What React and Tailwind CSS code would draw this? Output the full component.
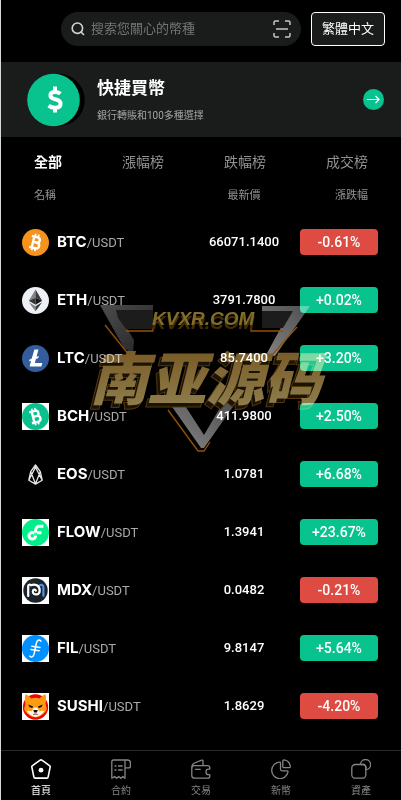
import { useState } from 'react'

const coins = [
  { name: 'BTC', price: '66071.1400', change: '-0.61%', Icon: BtcIcon },
  { name: 'ETH', price: '3791.7800', change: '+0.02%', Icon: EthIcon },
  { name: 'LTC', price: '85.7400', change: '+3.20%', Icon: LtcIcon },
  { name: 'BCH', price: '411.9800', change: '+2.50%', Icon: BchIcon },
  { name: 'EOS', price: '1.0781', change: '+6.68%', Icon: EosIcon },
  { name: 'FLOW', price: '1.3941', change: '+23.67%', Icon: FlowIcon },
  { name: 'MDX', price: '0.0482', change: '-0.21%', Icon: MdxIcon },
  { name: 'FIL', price: '9.8147', change: '+5.64%', Icon: FilIcon },
  { name: 'SUSHI', price: '1.8629', change: '-4.20%', Icon: ShibaIcon },
]

const tabs = ['全部', '漲幅榜', '跌幅榜', '成交榜']

const navItems = [
  { label: '首頁', Icon: HomeIcon },
  { label: '合約', Icon: ContractIcon },
  { label: '交易', Icon: WalletIcon },
  { label: '新幣', Icon: PieIcon },
  { label: '資產', Icon: AssetsIcon },
]

function CoinSvg({ square, children }) {
  return (
    <svg viewBox="0 0 27 27" className="size-[27px] shrink-0" aria-hidden="true">
      {square && <rect width="27" height="27" fill="#fff" />}
      {children}
    </svg>
  )
}

function BitcoinSign() {
  return (
    <g fill="none" stroke="#fff" strokeWidth="2.4">
      <path d="M11 8v11.2M8.4 8h6c3.7 0 3.7 5.3 0 5.3H11M14.4 13.3c4.6 0 4.6 5.9 0 5.9h-6" />
      <path d="M11.7 5v3M14.9 5v3M11.7 19v3M14.9 19v3" strokeWidth="1.7" />
    </g>
  )
}

function BtcIcon() {
  return (
    <CoinSvg>
      <circle cx="13.5" cy="13.5" r="13.5" fill="#f7931a" />
      <g transform="rotate(14 13.5 13.5)"><BitcoinSign /></g>
    </CoinSvg>
  )
}

function EthIcon() {
  return (
    <CoinSvg>
      <circle cx="13.5" cy="13.5" r="13.5" fill="#edf0f4" />
      <path d="M13.5 2.5 6.8 13.7l6.7-3z" fill="#828384" />
      <path d="m13.5 2.5 6.7 11.2-6.7-3z" fill="#3c3c3b" />
      <path d="m6.8 13.7 6.7-3v7z" fill="#343434" />
      <path d="m20.2 13.7-6.7-3v7z" fill="#161616" />
      <path d="m6.8 15.2 6.7 4v5z" fill="#828384" />
      <path d="m20.2 15.2-6.7 4v5z" fill="#3c3c3b" />
    </CoinSvg>
  )
}

function LtcIcon() {
  return (
    <CoinSvg>
      <circle cx="13.5" cy="13.5" r="13.5" fill="#345d9d" />
      <path d="M12.4 4.5h4.1l-2 7.3 2.3-.9-.5 2-2.4 1-1 4h7.4l-.9 3.5H7.6l1.5-5.7-2.1.8.6-2.1 2.1-.8z" fill="#fff" />
    </CoinSvg>
  )
}

function BchIcon() {
  return (
    <CoinSvg square>
      <circle cx="13.5" cy="13.5" r="13.5" fill="#0ac18e" />
      <g transform="rotate(-14 13.5 13.5)"><BitcoinSign /></g>
    </CoinSvg>
  )
}

function EosIcon() {
  return (
    <CoinSvg>
      <path
        d="M13.5 4 8.7 10.6 6.8 19.2l6.7 3.9 6.7-3.9-1.9-8.6zM8.7 10.8l4.8 12 4.8-12M6.8 19.2l6.7-13 6.7 13"
        fill="none"
        stroke="#e8e8e8"
        strokeWidth="1.3"
        strokeLinejoin="round"
      />
    </CoinSvg>
  )
}

function FlowIcon() {
  return (
    <CoinSvg square>
      <circle cx="13.5" cy="13.5" r="13.5" fill="#00ef8b" />
      <circle cx="10.3" cy="16.8" r="3.3" fill="none" stroke="#fff" strokeWidth="3" />
      <path d="M13.6 16.6v-5c0-3 1.8-4.4 4.4-4.4h3.4" fill="none" stroke="#fff" strokeWidth="3" />
      <path d="M13.5 12.2h6v3h-6z" fill="#fff" />
      <path d="M12.1 13.7h3v3h-3z" fill="#16ff99" />
    </CoinSvg>
  )
}

function MdxIcon() {
  return (
    <CoinSvg square>
      <circle cx="13.5" cy="13.5" r="12.2" fill="#1c2229" />
      <g fill="none" strokeWidth="2.2" strokeLinecap="round">
        <path d="M17.3 8.6c2.2-1.5 4.1-.6 4.1 1.8v8.4" stroke="#4b91e2" />
        <path d="M6.2 19V9.2c0-1.8 1.7-1.8 2.8-1 4-1.7 8.7.2 8.7 5.2 0 5.1-6.9 5.2-6.9 1.2 0-2.2 2.6-2.6 3.1-1" stroke="#fff" />
      </g>
    </CoinSvg>
  )
}

function FilIcon() {
  return (
    <CoinSvg square>
      <circle cx="13.5" cy="13.5" r="13.5" fill="#0090ff" />
      <g fill="none" stroke="#fff" strokeWidth="1.5" strokeLinecap="round">
        <path d="M18.9 6.1c-1.7-2.2-3.9-.9-4.6 2.2l-2 9.8c-.7 3.6-2.4 4.7-4.5 3" />
        <path d="m9.8 11.2 8.2 1.2M9 14.5l8.2 1.2" />
      </g>
    </CoinSvg>
  )
}

function ShibaIcon() {
  return (
    <CoinSvg square>
      <circle cx="13.5" cy="14" r="12.7" fill="#f00500" />
      <path d="M3.5 1.2c2.5.7 4.4 2.3 5.7 4.3a14 14 0 0 1 8.6 0c1.3-2 3.2-3.6 5.7-4.3.9 3.5.7 6.7 0 9.4l1.3 5.6c-1.5 4-6 7.3-11.3 8.3-5.3-1-9.8-4.3-11.3-8.3l1.3-5.6c-.7-2.7-.9-5.9 0-9.4z" fill="#ff9b12" />
      <path d="M4.6 18c1.8-.6 3.6-.4 5 .2l2.3-3.8h3.2l2.3 3.8c1.4-.6 3.2-.8 5-.2-1.6 3-4.8 5.3-8.9 6.1-4.1-.8-7.3-3.1-8.9-6.1z" fill="#fff3e4" />
      <path d="m6.3 11.5 4.8 1.9-.8 1.7-2.9-1zM20.7 11.5l-4.8 1.9.8 1.7 2.9-1zM11.2 17h4.6l-1 2.5h-2.6z" fill="#17110d" />
      <path d="M11.4 21.6c1.4-.8 2.8-.8 4.2 0" fill="none" stroke="#4a2c1d" />
    </CoinSvg>
  )
}

function NavSvg({ children }) {
  return (
    <svg
      viewBox="0 0 20 20"
      className="size-5"
      fill="none"
      stroke="currentColor"
      strokeWidth="1.3"
      strokeLinejoin="round"
      strokeLinecap="round"
      aria-hidden="true"
    >
      {children}
    </svg>
  )
}

function HomeIcon() {
  return (
    <NavSvg>
      <path d="M8.8 1.3 1.2 6.8q-.6.4-.4 1.1l2.1 10.2q.2 1 1.2 1h11.8q1 0 1.2-1l2.1-10.2q.2-.7-.4-1.1l-7.6-5.5q-1.2-.8-2.4 0z" strokeWidth="1.6" />
      <circle cx="10" cy="11.2" r="2.4" fill="currentColor" stroke="none" />
    </NavSvg>
  )
}

function ContractIcon() {
  return (
    <NavSvg>
      <path d="M14 1H2.5Q.8 1 .8 2.7v16.5l2.8-1.7 2.1 1.8 2-1.8 2.1 1.8 2-1.8 2.2 1.7zM14 1h2.4q3 0 3 3v3.3q0 1.5-1.5 1.5H14" />
      <path d="M4 7h1M7.5 7h3.7M4 11h1M7.5 11h3.7" />
    </NavSvg>
  )
}

function WalletIcon() {
  return (
    <NavSvg>
      <path d="M18.8 10.2V8.7q0-2-2-2H3.2Q.8 6.7.8 9v7.5q0 2.7 2.7 2.7h13.3q2 0 2-2v-1.5h-1.2c-3.5 0-3.5-5.5 0-5.5z" />
      <path d="M1 8Q1 5 3.5 4l7.2-2.8q1.3-.4 1.3.9v4.4M4.5 10.3h4.7" />
    </NavSvg>
  )
}

function PieIcon() {
  return (
    <NavSvg>
      <path d="M9 3.2A8.2 8.2 0 1 0 17 12.8q.2-1-.8-1H11q-1.5 0-1.5-1.5V4q0-.8-.5-.8z" />
      <path d="M11.8 2v5.4q0 1.3 1.3 1.3h5q1.3 0 1.2-1.2A7 7 0 0 0 13 .8q-1.2 0-1.2 1.2z" />
    </NavSvg>
  )
}

function AssetsIcon() {
  return (
    <NavSvg>
      <rect x=".8" y="5.5" width="14" height="13.7" rx="3.5" />
      <path d="M9.4 5.3a5.1 5.1 0 1 1 5.5 5.4" />
      <path d="M10.5 5.7q2-1.2 3.5.2t.7 4" />
    </NavSvg>
  )
}

function Watermark() {
  return (
    <div className="pointer-events-none absolute top-[295px] left-[79px] opacity-65 mix-blend-screen" aria-hidden="true">
      <svg viewBox="0 0 260 165" className="h-[165px] w-[260px]">
        <defs>
          <linearGradient id="steelLeft" x1="0" x2="1" y1="0" y2="1">
            <stop offset="0" stopColor="#777" />
            <stop offset="1" stopColor="#333" />
          </linearGradient>
          <linearGradient id="steelRight" x1="1" x2="0" y1="0" y2="1">
            <stop offset="0" stopColor="#777" />
            <stop offset="1" stopColor="#ccc" />
          </linearGradient>
          <linearGradient id="gold" x1="0" x2="0" y1="0" y2="1">
            <stop offset="0" stopColor="#b07a26" />
            <stop offset="1" stopColor="#e0cb80" />
          </linearGradient>
        </defs>
        <path d="M20 10h53v5H36l18 30-1 14-9-6z" fill="url(#steelLeft)" />
        <path d="M36 15h37v19H46l-8-11z" fill="#2b2b2b" />
        <path d="M182 11h48l-35 50-9-1 24-44h-28z" fill="url(#steelRight)" />
        <path d="M182 16h31l-10 17h-21z" fill="#2b2b2b" />
        <path d="m88 106 33 47 3 0 33-47h-13l-20 34-22-34z" fill="url(#steelRight)" />
        <path d="M25 30 49 60M46 36h27v-3M171 32v4h32M217 32l-26 29M88 115l30 41h6l6-9" fill="none" stroke="#e47b0c" strokeWidth="1.3" />
        <g fontStyle="italic" fontWeight="900">
          <g fontSize="19" fontFamily="'Liberation Sans', sans-serif">
            <text x="72" y="34" fill="#65440b">KVXR.COM</text>
            <text x="72" y="30" fill="#c6a63e">KVXR.COM</text>
          </g>
          <g fontSize="58" fontFamily="'Noto Sans CJK SC', sans-serif">
            <text x="7" y="109" fill="#2b1d0a" stroke="#7d5210">南亚源码</text>
            <text x="10" y="105" fill="url(#gold)">南亚源码</text>
          </g>
        </g>
      </svg>
    </div>
  )
}

export default function App() {
  const [tab, setTab] = useState(0)
  const [page, setPage] = useState(0)

  return (
    <div className="relative flex min-h-screen flex-col border-l border-[#d8d8d8] bg-black font-['Roboto','Noto_Sans_CJK_TC',sans-serif] text-white">
      <header className="flex items-center gap-[10px] py-3 pr-4 pl-[60px]">
        <div className="flex h-[34px] min-w-0 flex-1 items-center gap-[6px] rounded-full bg-[#1a1c1c] px-[10px]">
          <svg viewBox="0 0 14 14" className="size-[14px] shrink-0" fill="none" stroke="#d0d4d6" strokeWidth="1.6" aria-hidden="true">
            <circle cx="6.4" cy="6.2" r="5.2" />
            <path d="m10 10 3 3" />
          </svg>
          <input
            aria-label="搜索"
            placeholder="搜索您關心的幣種"
            className="min-w-0 flex-1 bg-transparent text-[13px] outline-none placeholder:text-[#737575]"
          />
          <button aria-label="掃一掃">
            <svg viewBox="0 0 18 18" className="block size-[18px]" fill="none" stroke="#c4c6c6" strokeWidth="1.5" aria-hidden="true">
              <path d="M1 5V2.5Q1 1 2.5 1H6M12 1h3.5Q17 1 17 2.5V5M17 13v2.5q0 1.5-1.5 1.5H12M6 17H2.5Q1 17 1 15.5V13M3 9h12" />
            </svg>
          </button>
        </div>
        <button className="h-[34px] w-[74px] rounded-[4px] border border-white bg-[#1a1c1c] text-[13px]">繁體中文</button>
      </header>

      <section className="mt-1 flex h-[75px] items-center bg-[#1a1c1c] pr-[17px] pl-[26px]">
        <svg viewBox="0 0 58 54" className="h-[54px] w-[58px] shrink-0" aria-hidden="true">
          <circle cx="31.5" cy="27" r="26.3" fill="#000" />
          <circle cx="26.5" cy="27" r="26.3" fill="#08c38e" />
          <path d="M33.4 20.8c-2.8-2.3-10-3-10 1.6 0 5.2 10.2 2.5 10.2 8.3 0 5.2-8.1 5-12 2M28 13.5v5M28 34v5.5" fill="none" stroke="#fff" strokeWidth="4" />
        </svg>
        <div className="ml-3 flex-1">
          <h1 className="text-[17px] leading-6 font-bold">快捷買幣</h1>
          <p className="mt-2 text-[10px] leading-4 text-[#a2a4a4]">銀行轉賬和100多種選擇</p>
        </div>
        <button aria-label="快捷買幣" className="flex size-[21px] items-center justify-center rounded-full bg-[#08c38e]">
          <svg viewBox="0 0 13 9" className="h-[9px] w-[13px]" fill="none" stroke="#fff" strokeWidth="1.2" aria-hidden="true">
            <path d="M0 4.5h12M8.5 1 12 4.5 8.5 8" />
          </svg>
        </button>
      </section>

      <div className="flex justify-between px-[33px] pt-[13px]">
        {tabs.map((label, i) => (
          <button
            key={label}
            onClick={() => setTab(i)}
            className={i === tab ? 'text-sm leading-6 font-bold text-white' : 'text-sm leading-6 text-[#929292]'}
          >
            {label}
          </button>
        ))}
      </div>

      <table className="mt-2 w-full table-fixed">
        <thead>
          <tr className="h-7 text-[11px] text-[#929292]">
            <th className="pl-[33px] text-left font-normal">名稱</th>
            <th className="w-[112px] text-center font-normal">最新價</th>
            <th className="w-[101px] pr-[33px] text-right font-normal">漲跌幅</th>
          </tr>
        </thead>
        <tbody>
          <tr className="h-[3px]" />
          {coins.map(({ name, price, change, Icon }) => (
            <tr key={name} className="h-[58px]">
              <td className="pl-[21px]">
                <div className="flex items-center gap-2">
                  <Icon />
                  <span className="text-[13px] whitespace-nowrap text-[#aaa]">
                    <b className="font-['Inter'] text-[15px] font-bold text-white">{name}</b>/USDT
                  </span>
                </div>
              </td>
              <td className="text-center text-[13px] font-medium">{price}</td>
              <td className="pr-[23px]">
                <span className={`block h-[26px] rounded-[4px] text-center text-sm leading-[26px] font-medium ${change[0] === '-' ? 'bg-[#dd4b42]' : 'bg-[#08c38e]'}`}>
                  {change}
                </span>
              </td>
            </tr>
          ))}
        </tbody>
      </table>

      <Watermark />

      <nav className="mt-auto flex h-[50px] border-t border-[#292929]">
        {navItems.map(({ label, Icon }, i) => (
          <button
            key={label}
            onClick={() => setPage(i)}
            className={`flex flex-1 flex-col items-center gap-1 pt-2 text-[10px] leading-4 ${i === page ? 'text-white' : 'text-[#858585]'}`}
          >
            <Icon />
            {label}
          </button>
        ))}
      </nav>
    </div>
  )
}
